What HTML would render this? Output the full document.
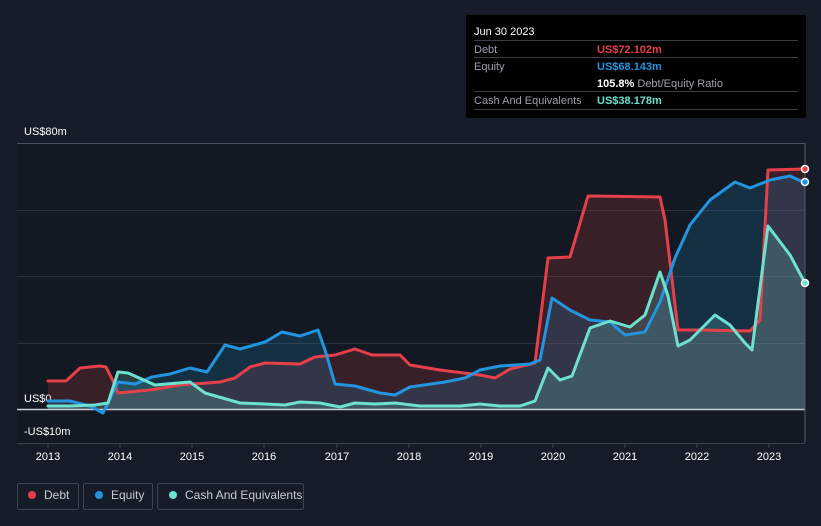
<!DOCTYPE html><html><head><style>
body{margin:0;background:#161c27;width:821px;height:526px;overflow:hidden;font-family:"Liberation Sans",sans-serif}
</style></head><body>
<svg width="821" height="526" style="position:absolute;left:0;top:0" font-family="Liberation Sans, sans-serif">
<rect x="17" y="143" width="788" height="300" fill="#131922"/>
<g stroke="#2a313d" stroke-width="1">
<line x1="17" y1="143.5" x2="805" y2="143.5" stroke="#4a515c"/>
<line x1="17" y1="210.5" x2="805" y2="210.5"/>
<line x1="17" y1="276.5" x2="805" y2="276.5"/>
<line x1="17" y1="343.5" x2="805" y2="343.5"/>
<line x1="17" y1="443.5" x2="805" y2="443.5" stroke="#3a414c"/>
</g>
<g font-size="11" fill="#fff">
<text x="24" y="135">US$80m</text>
<text x="24" y="402">US$0</text>
<text x="24" y="435">-US$10m</text>
</g>
<g font-size="11" fill="#fff" text-anchor="middle">
<text x="48" y="460">2013</text><text x="120" y="460">2014</text><text x="192" y="460">2015</text><text x="264" y="460">2016</text><text x="337" y="460">2017</text><text x="409" y="460">2018</text><text x="481" y="460">2019</text><text x="553" y="460">2020</text><text x="625" y="460">2021</text><text x="697" y="460">2022</text><text x="769" y="460">2023</text>
</g>
<g stroke="#3a414c"><line x1="48" y1="443" x2="48" y2="448"/><line x1="120" y1="443" x2="120" y2="448"/><line x1="192" y1="443" x2="192" y2="448"/><line x1="264" y1="443" x2="264" y2="448"/><line x1="337" y1="443" x2="337" y2="448"/><line x1="409" y1="443" x2="409" y2="448"/><line x1="481" y1="443" x2="481" y2="448"/><line x1="553" y1="443" x2="553" y2="448"/><line x1="625" y1="443" x2="625" y2="448"/><line x1="697" y1="443" x2="697" y2="448"/><line x1="769" y1="443" x2="769" y2="448"/></g>
<defs>
<path id="d" d="M48 381 L66 381 L80 368 L100 366 L106 367 L115 385 L118 393 L150 390 L180 385 L220 382 L235 378 L250 367 L265 363 L300 364 L315 357 L335 355 L355 349 L372 355 L400 355 L410 365 L440 370 L480 375 L495 378 L510 369 L535 363 L548 258 L570 257 L588 196 L660 197 L665 220 L678 330 L700 330 L750 331 L760 320 L768 170 L805 169"/>
<path id="e" d="M48 401 L70 401 L90 406 L103 413 L118 382 L135 384 L152 377 L170 374 L190 368 L207 372 L225 345 L240 349 L265 342 L282 332 L300 336 L318 330 L325 350 L335 384 L355 386 L380 393 L395 395 L410 387 L445 382 L465 378 L480 370 L500 366 L530 364 L540 360 L552 298 L570 310 L590 320 L610 322 L625 335 L645 332 L660 302 L675 258 L690 225 L710 200 L735 182 L750 188 L770 180 L790 176 L805 183"/>
<path id="c" d="M48 406 L70 406 L95 405 L108 403 L118 372 L128 373 L155 385 L190 382 L205 393 L240 403 L265 404 L285 405 L300 402 L320 403 L340 407 L355 403 L375 404 L395 403 L420 406 L460 406 L480 404 L500 406 L520 406 L535 401 L548 368 L560 380 L572 376 L590 328 L610 321 L630 327 L645 315 L660 272 L668 296 L678 346 L690 340 L715 315 L730 325 L745 343 L752 350 L768 226 L790 255 L805 283"/>
</defs>
<path d="M48 381 L66 381 L80 368 L100 366 L106 367 L115 385 L118 393 L150 390 L180 385 L220 382 L235 378 L250 367 L265 363 L300 364 L315 357 L335 355 L355 349 L372 355 L400 355 L410 365 L440 370 L480 375 L495 378 L510 369 L535 363 L548 258 L570 257 L588 196 L660 197 L665 220 L678 330 L700 330 L750 331 L760 320 L768 170 L805 169 L805 409 L48 409Z" fill="#e5404a" fill-opacity="0.18"/>
<path d="M48 401 L70 401 L90 406 L103 413 L118 382 L135 384 L152 377 L170 374 L190 368 L207 372 L225 345 L240 349 L265 342 L282 332 L300 336 L318 330 L325 350 L335 384 L355 386 L380 393 L395 395 L410 387 L445 382 L465 378 L480 370 L500 366 L530 364 L540 360 L552 298 L570 310 L590 320 L610 322 L625 335 L645 332 L660 302 L675 258 L690 225 L710 200 L735 182 L750 188 L770 180 L790 176 L805 183 L805 409 L48 409Z" fill="#2394df" fill-opacity="0.18"/>
<path d="M48 406 L70 406 L95 405 L108 403 L118 372 L128 373 L155 385 L190 382 L205 393 L240 403 L265 404 L285 405 L300 402 L320 403 L340 407 L355 403 L375 404 L395 403 L420 406 L460 406 L480 404 L500 406 L520 406 L535 401 L548 368 L560 380 L572 376 L590 328 L610 321 L630 327 L645 315 L660 272 L668 296 L678 346 L690 340 L715 315 L730 325 L745 343 L752 350 L768 226 L790 255 L805 283 L805 409 L48 409Z" fill="#6de1d0" fill-opacity="0.2"/>
<line x1="17" y1="409.5" x2="805" y2="409.5" stroke="#c8ccd2" stroke-width="1.5"/>
<g fill="none" stroke-width="3" stroke-linejoin="round" stroke-linecap="round">
<use href="#d" stroke="#e5404a"/>
<use href="#e" stroke="#2394df"/>
<use href="#c" stroke="#6de1d0"/>
</g>
<line x1="805" y1="143" x2="805" y2="443" stroke="#555c66"/>
<circle cx="805" cy="169" r="3.5" fill="#e5404a" stroke="#fff" stroke-width="1.5"/>
<circle cx="805" cy="182" r="3.5" fill="#2394df" stroke="#fff" stroke-width="1.5"/>
<circle cx="805" cy="283" r="3.5" fill="#6de1d0" stroke="#fff" stroke-width="1.5"/>
<rect x="466" y="15" width="340" height="103" fill="#000"/>
<g stroke="#3a3f46"><line x1="474" y1="40.5" x2="798" y2="40.5"/><line x1="474" y1="57.5" x2="798" y2="57.5"/><line x1="474" y1="91.5" x2="798" y2="91.5"/><line x1="474" y1="109.5" x2="798" y2="109.5"/></g>
<g font-size="11">
<text x="474" y="35" fill="#fff">Jun 30 2023</text>
<text x="474" y="53" fill="#9aa0a8">Debt</text>
<text x="597" y="53" fill="#e5404a" font-weight="bold">US$72.102m</text>
<text x="474" y="70" fill="#9aa0a8">Equity</text>
<text x="597" y="70" fill="#2394df" font-weight="bold">US$68.143m</text>
<text x="597" y="87" fill="#fff" font-weight="bold">105.8% <tspan fill="#9aa0a8" font-weight="normal">Debt/Equity Ratio</tspan></text>
<text x="474" y="104" fill="#9aa0a8">Cash And Equivalents</text>
<text x="597" y="104" fill="#6de1d0" font-weight="bold">US$38.178m</text>
</g>
<g fill="none" stroke="#3d4450"><rect x="17.5" y="483.5" width="61" height="26" rx="2"/><rect x="83.5" y="483.5" width="69" height="26" rx="2"/><rect x="157.5" y="483.5" width="146" height="26" rx="2"/></g>
<circle cx="32" cy="495" r="4" fill="#e5404a"/><circle cx="99" cy="495" r="4" fill="#2394df"/><circle cx="173" cy="495" r="4" fill="#6de1d0"/>
<g font-size="12" fill="#c8ccd2"><text x="44" y="499">Debt</text><text x="111" y="499">Equity</text><text x="185" y="499">Cash And Equivalents</text></g>
</svg>
</body></html>
